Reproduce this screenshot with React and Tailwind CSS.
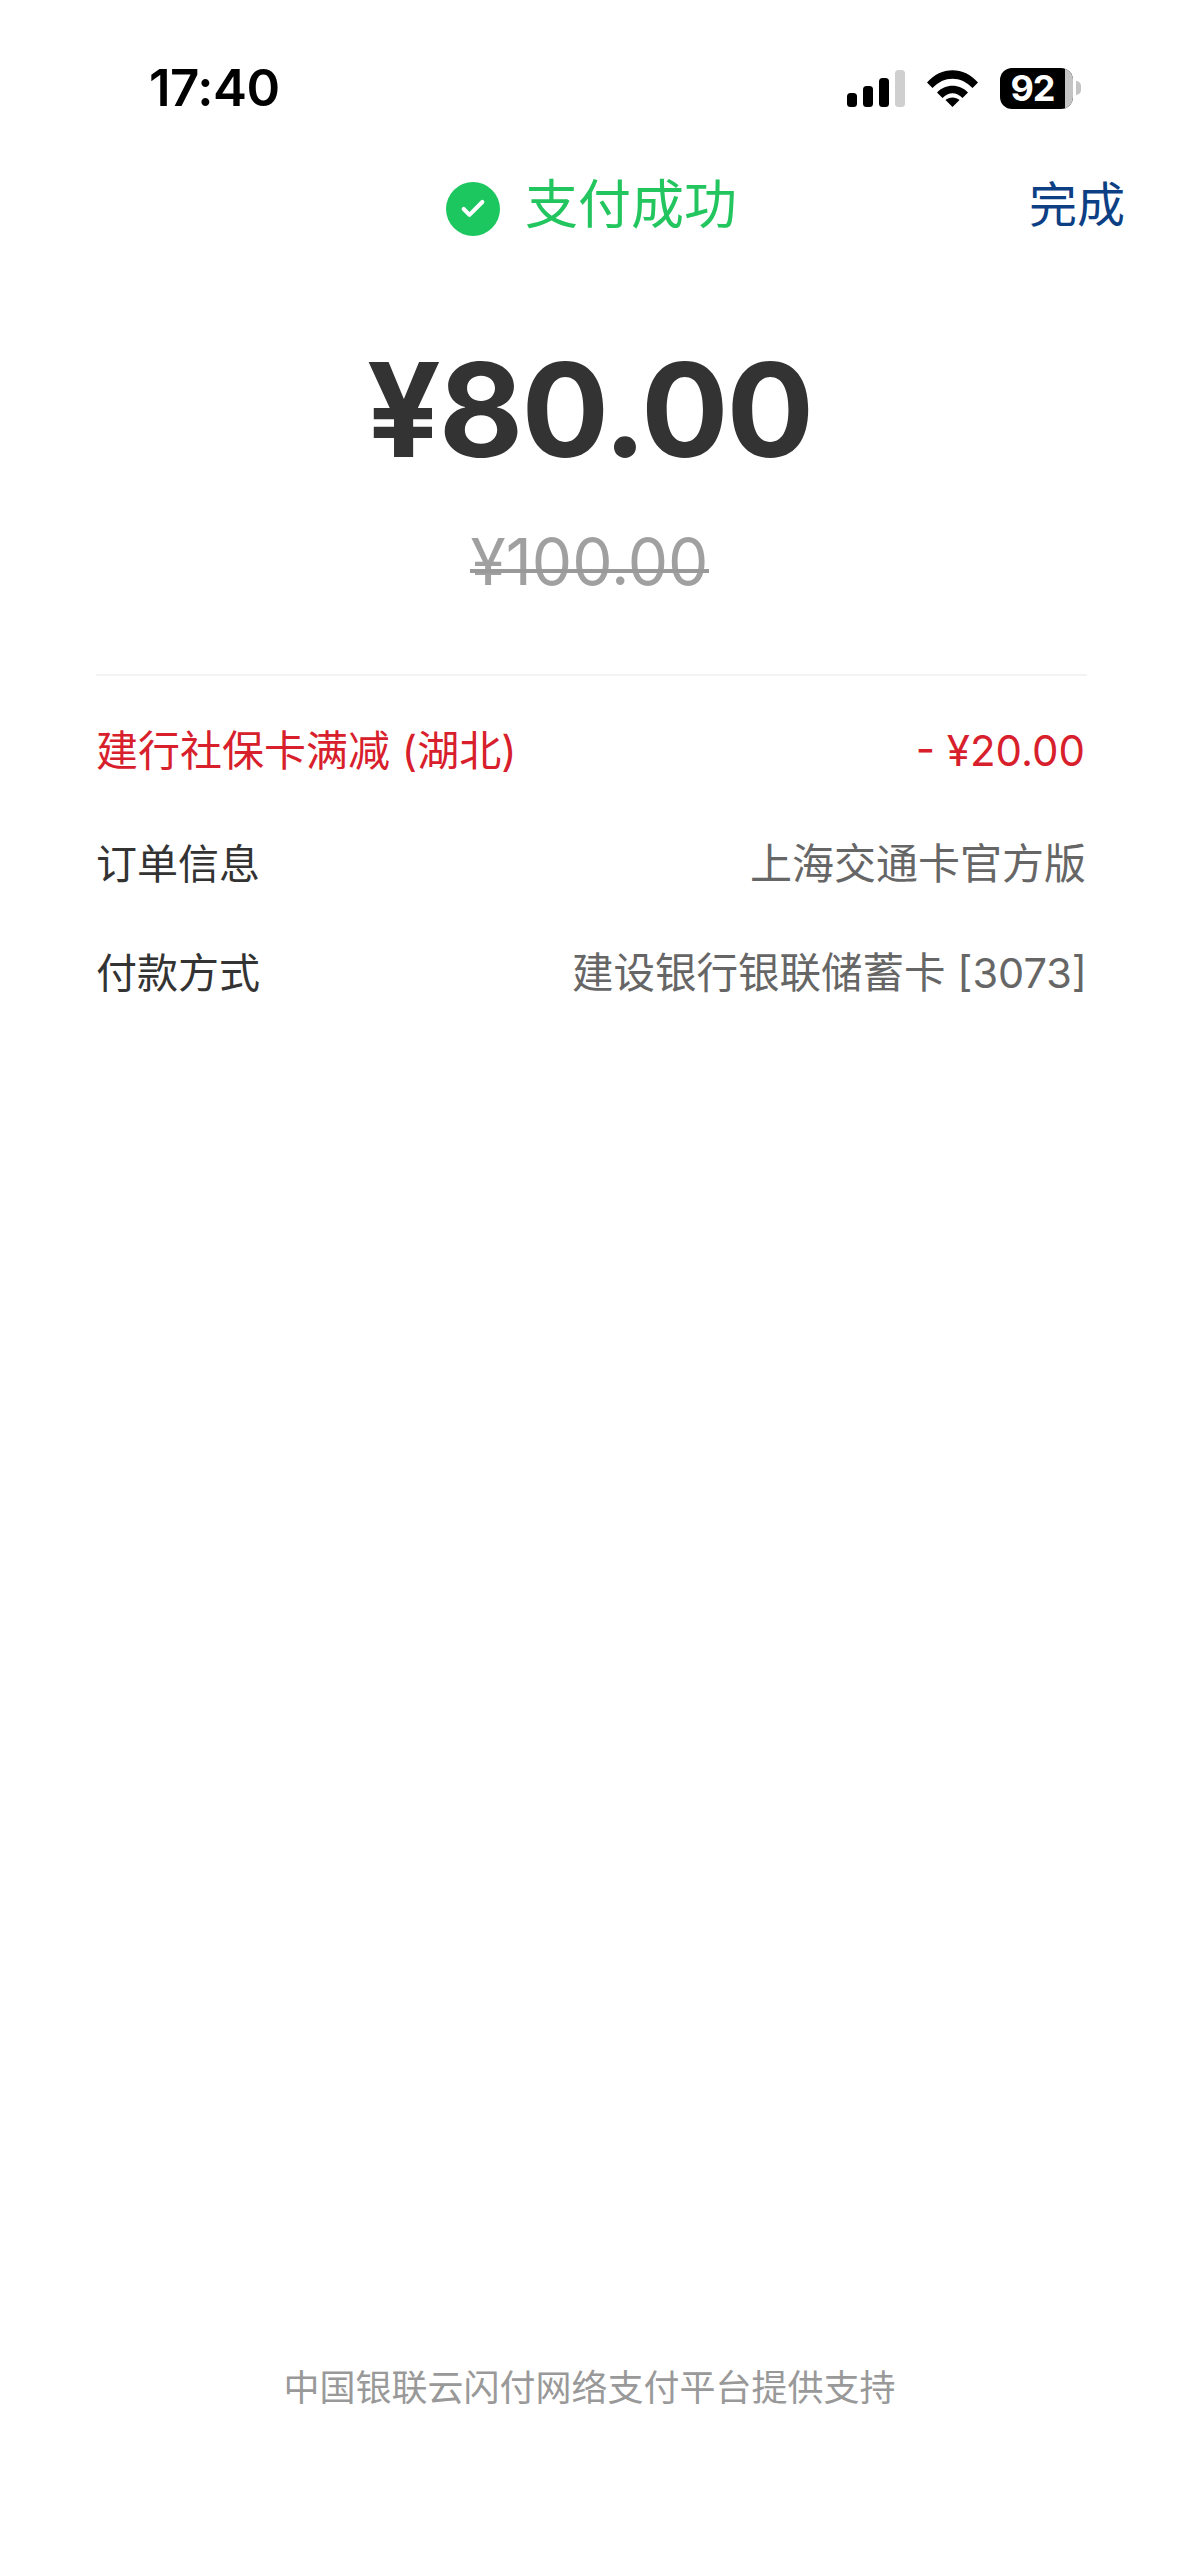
import { Check } from "lucide-react"

const fontStack = "font-['Inter','Noto_Sans_CJK_SC',sans-serif]"

function StatusIcons() {
  return (
    <div className="flex items-center">
      {/* signal */}
      <svg width="58" height="37" viewBox="0 0 58 37" className="block">
        <rect x="0" y="23" width="10" height="14" rx="3.5" fill="#000" />
        <rect x="16" y="16" width="10" height="21" rx="3.5" fill="#000" />
        <rect x="32" y="8" width="10" height="29" rx="3.5" fill="#000" />
        <rect x="48" y="0" width="10" height="37" rx="3.5" fill="#cfcfcf" />
      </svg>
      {/* wifi */}
      <svg width="51" height="37" viewBox="0 0 51 37" className="block ml-[22px]">
        <path d="M0 12.5C14 -4 37 -4 51 12.5L45.5 18C34 5.5 17 5.5 5.5 18Z" fill="#000" />
        <path d="M10 22.5C18 13.5 33 13.5 41 22.5L35.5 28C29.5 21.5 21.5 21.5 15.5 28Z" fill="#000" />
        <path d="M18.5 30C22 26.5 29 26.5 32.5 30L25.5 37Z" fill="#000" />
      </svg>
      {/* battery */}
      <div className="ml-[22px] flex items-center">
        <div className="relative w-[73px] h-[41px] rounded-[12px] bg-black overflow-hidden flex items-center">
          <div className="absolute right-0 top-0 bottom-0 w-[8px] bg-[#c4c4c4]" />
          <span className="relative w-[65px] text-center text-white text-[36px] tracking-[-1px] leading-none font-bold font-['Inter',sans-serif]">
            92
          </span>
        </div>
        <div className="ml-[3px] w-[5px] h-[14px] rounded-r-full bg-[#c4c4c4]" />
      </div>
    </div>
  )
}

function Row({ label, value, labelClass, valueClass, className }) {
  return (
    <div className={`flex items-center justify-between ${className}`}>
      <span className={`leading-[56px] ${labelClass}`}>{label}</span>
      <span className={`leading-[56px] ${valueClass}`}>{value}</span>
    </div>
  )
}

export default function App() {
  return (
    <div className={`min-h-[2556px] bg-white flex flex-col ${fontStack}`}>
      {/* Status bar */}
      <div className="flex items-center justify-between pl-[149px] pr-[98px] pt-[62px]">
        <span className="text-[51px] leading-[52px] font-semibold tracking-[-0.5px] text-black">17:40</span>
        <StatusIcons />
      </div>

      {/* Header */}
      <div className="grid grid-cols-[1fr_auto_1fr] items-center mt-[56px] pr-[54px]">
        <div />
        <div className="flex items-center ml-[58px]">
          <div className="w-[54px] h-[54px] mt-[8px] rounded-full bg-[#1cc760] flex items-center justify-center">
            <Check className="w-[28px] h-[28px] text-white" strokeWidth={3.5} />
          </div>
          <span className="ml-[25px] text-[53px] leading-[70px] text-[#22c55e]">支付成功</span>
        </div>
        <span className="justify-self-end text-[48px] leading-[70px] text-[#0d3f85]">完成</span>
      </div>

      {/* Amount */}
      <div className="flex flex-col items-center mt-[90px]">
        <span className="text-[130px] leading-[160px] font-bold tracking-[-2px] text-[#333333]">¥80.00</span>
        <div className="relative mt-[32px]">
          <span className="block text-[64px] leading-[80px] text-[#a0a0a0]">¥100.00</span>
          <div className="absolute -left-[1px] -right-[1px] top-[47px] h-[4px] bg-[#999999]" />
        </div>
      </div>

      {/* Details */}
      <div className="ml-[96px] mr-[92px] mt-[72px] border-t-2 border-[#f3f3f3] pt-[47px]">
        <Row
          label="建行社保卡满减 (湖北)"
          value="- ¥20.00"
          labelClass="text-[42px] text-[#d7202c]"
          valueClass="text-[42px] mr-[2px] text-[#d7202c]"
        />
        <Row
          label="订单信息"
          value="上海交通卡官方版"
          labelClass="text-[41px] text-[#333333]"
          valueClass="text-[42px] mr-[1px] text-[#666666]"
          className="mt-[57px]"
        />
        <Row
          label="付款方式"
          value="建设银行银联储蓄卡 [3073]"
          labelClass="text-[41px] text-[#333333]"
          valueClass="text-[41.5px] text-[#666666]"
          className="mt-[53px]"
        />
      </div>

      {/* Footer */}
      <div className="mt-auto pb-[143px] text-center text-[36px] leading-[50px] text-[#999999]">
        中国银联云闪付网络支付平台提供支持
      </div>
    </div>
  )
}
